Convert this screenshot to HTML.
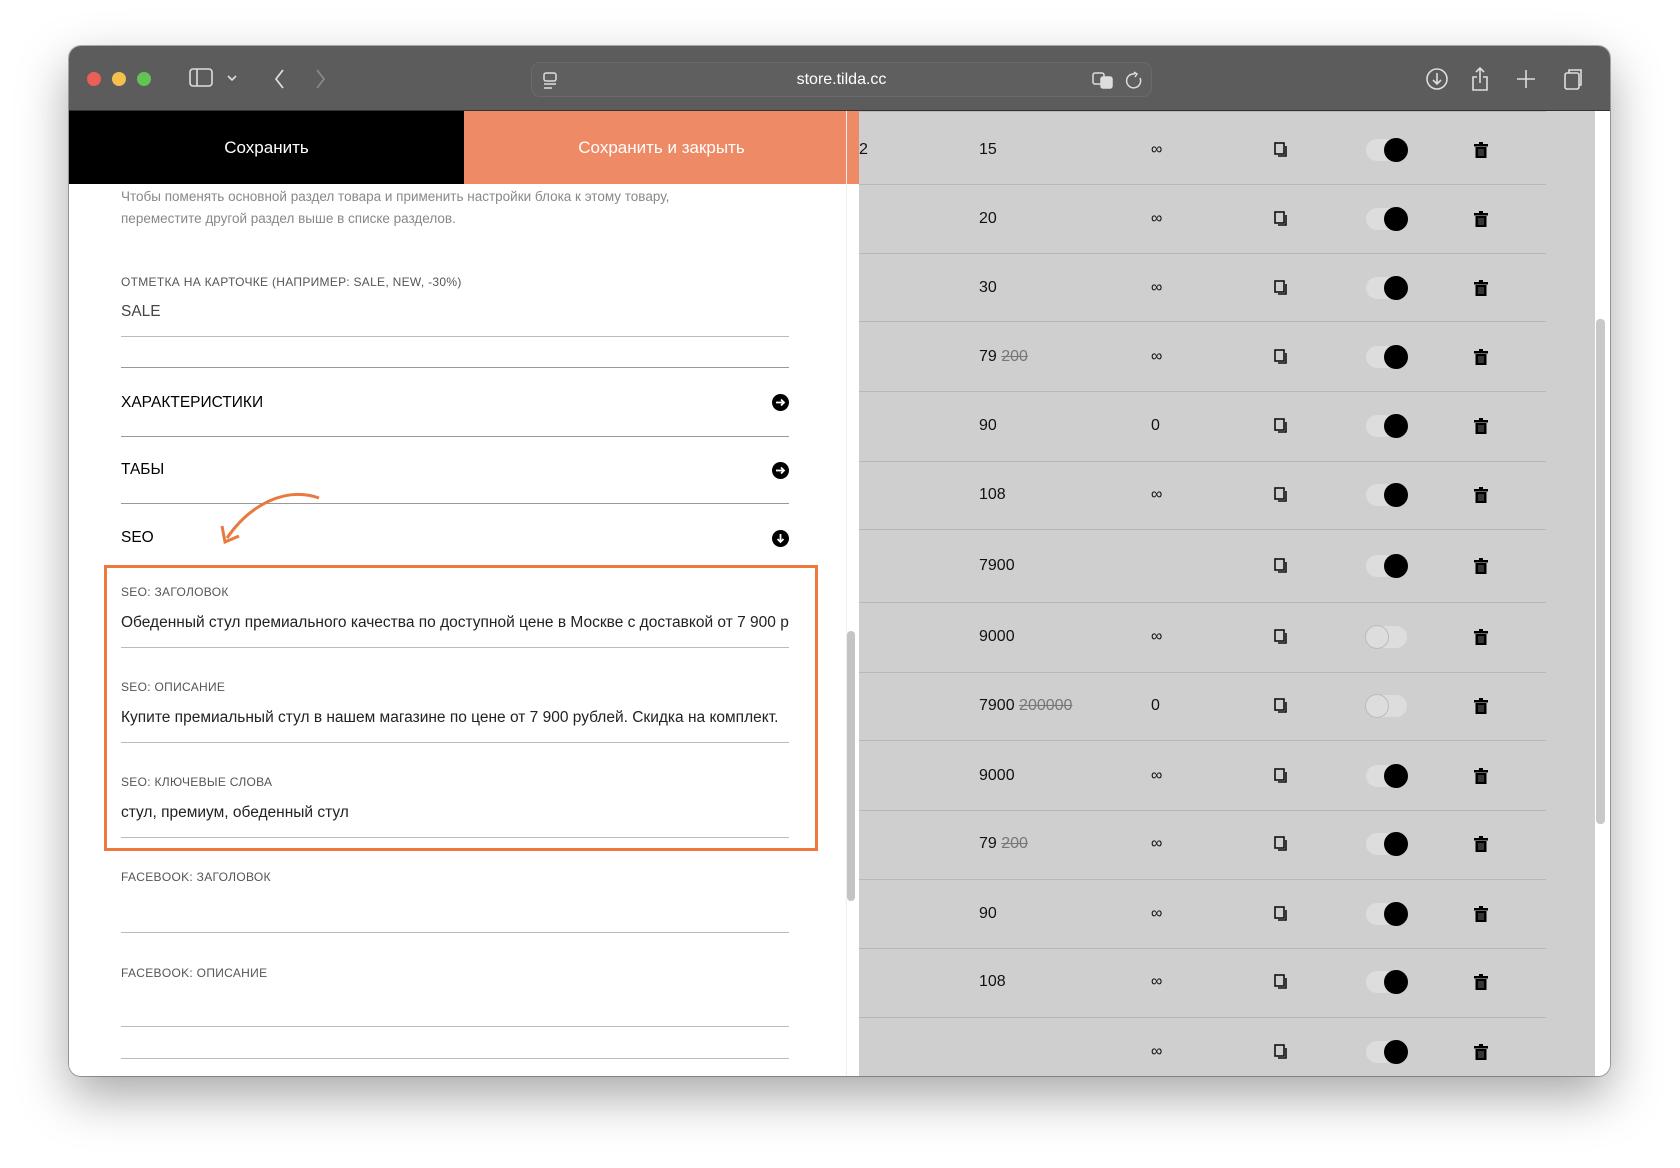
<!DOCTYPE html>
<html><head><meta charset="utf-8"><style>
*{margin:0;padding:0;box-sizing:border-box}
body{width:1680px;height:1168px;background:#fff;position:relative;overflow:hidden;font-family:"Liberation Sans",sans-serif}
.win{position:absolute;left:69px;top:46px;width:1541px;height:1030px;border-radius:12px;overflow:hidden;box-shadow:0 20px 50px rgba(0,0,0,.35),0 0 0 1px rgba(0,0,0,.3);background:#fff}
.tb{position:absolute;left:0;top:0;width:100%;height:65px;background:#5c5c5c;border-bottom:1px solid #333}
.dot{position:absolute;top:26px;width:14px;height:14px;border-radius:50%}
.url{position:absolute;left:462px;top:16px;width:621px;height:35px;border:1px solid #6a6a6a;border-radius:9px;background:#5f5f5f;color:#fff;font-size:16px;text-align:center;line-height:33px}
.a{position:absolute}
.lbl{position:absolute;left:52px;font-size:12px;color:#555;letter-spacing:.3px}
.val{position:absolute;left:52px;font-size:15.5px;color:#222;white-space:nowrap;width:668px;overflow:hidden}
.ln{position:absolute;left:52px;width:668px;height:1px;background:#bbb}
.hd{position:absolute;left:52px;font-size:15.5px;color:#000}
.ic{position:absolute;left:703px;width:17px;height:17px;border-radius:50%;background:#000}
.row{position:absolute;left:790px;width:687px;height:1px;background:#b8b8b8}
.c{position:absolute;font-size:16px;color:#111;transform:translateY(-50%)}
.tg{position:absolute;width:41px;height:22px;border-radius:11px;background:#ddd;transform:translateY(-50%)}
.tg i{position:absolute;top:-1px;width:24px;height:24px;border-radius:50%}
</style></head><body>
<div class="win">
 <div class="tb">
  <div class="dot" style="left:18px;background:#ec5f57"></div>
  <div class="dot" style="left:43px;background:#f4bf4f"></div>
  <div class="dot" style="left:68px;background:#61c454"></div>
  <svg class="a" style="left:120px;top:22px" width="60" height="22" fill="none" stroke="#ddd" stroke-width="1.6"><rect x="1" y="1" width="22" height="17" rx="3"/><line x1="8" y1="1" x2="8" y2="18"/><path d="M39 8l4 4 4-4"/></svg>
  <svg class="a" style="left:203px;top:22px" width="60" height="22" fill="none" stroke-width="1.8"><path d="M11 2l-7 9 7 9" stroke="#ddd"/><path d="M45 2l7 9-7 9" stroke="#888"/></svg>
  <div class="url"><svg class="a" style="left:11px;top:9px" width="14" height="18" fill="none" stroke="#ddd" stroke-width="1.5"><rect x="1" y="1" width="12" height="8" rx="2"/><line x1="1" y1="12" x2="13" y2="12"/><line x1="1" y1="16" x2="9" y2="16"/></svg>store.tilda.cc<svg class="a" style="left:560px;top:8px" width="50" height="20" fill="none" stroke="#ddd" stroke-width="1.5"><rect x="1" y="2" width="11" height="11" rx="2"/><rect x="9" y="6" width="11" height="11" rx="2" fill="#ddd"/><path d="M43 3a7 7 0 1 0 5 4M42 1l3 2-2 3"/></svg></div>
  <svg class="a" style="left:1356px;top:20px" width="170" height="26" fill="none" stroke="#ddd" stroke-width="1.6"><circle cx="12" cy="13" r="10"/><path d="M12 7v11M8 14l4 4 4-4"/><path d="M52 11h-4v13h14V11h-4M55 17V2M51 6l4-4 4 4"/><path d="M101 4v18M92 13h18"/><rect x="140" y="7" width="14" height="16" rx="2"/><path d="M144 7V4h12v15h-2"/></svg>
 </div>
 <!-- left panel -->
 <div class="a" style="left:0;top:65px;width:790px;height:965px;background:#fff">
  <div class="a" style="left:0;top:0;width:395px;height:73px;background:#000;color:#fff;font-size:17px;text-align:center;line-height:73px">Сохранить</div>
  <div class="a" style="left:395px;top:0;width:395px;height:73px;background:#ef8a66;color:#fff;font-size:17px;text-align:center;line-height:73px">Сохранить и закрыть</div>
  <div class="a" style="left:52px;top:75px;font-size:13.5px;color:#888;line-height:22px">Чтобы поменять основной раздел товара и применить настройки блока к этому товару,<br>переместите другой раздел выше в списке разделов.</div>
  <div class="lbl" style="top:164px">ОТМЕТКА НА КАРТОЧКЕ (НАПРИМЕР: SALE, NEW, -30%)</div>
  <div class="val" style="top:192px;color:#444">SALE</div>
  <div class="ln" style="top:225px"></div>
  <div class="ln" style="top:256px;background:#999"></div>
  <div class="hd" style="top:283px">ХАРАКТЕРИСТИКИ</div>
  <div class="ic" style="top:283px"><svg width="17" height="17"><path d="M4 8.5h8M9 5.5l3 3-3 3" stroke="#fff" stroke-width="1.8" fill="none"/></svg></div>
  <div class="ln" style="top:325px;background:#999"></div>
  <div class="hd" style="top:350px">ТАБЫ</div>
  <div class="ic" style="top:351px"><svg width="17" height="17"><path d="M4 8.5h8M9 5.5l3 3-3 3" stroke="#fff" stroke-width="1.8" fill="none"/></svg></div>
  <div class="ln" style="top:392px;background:#999"></div>
  <div class="hd" style="top:418px">SEO</div>
  <div class="ic" style="top:419px"><svg width="17" height="17"><path d="M8.5 4v8M5.5 9l3 3 3-3" stroke="#fff" stroke-width="1.8" fill="none"/></svg></div>
  <svg class="a" style="left:140px;top:375px" width="120" height="70" fill="none" stroke="#e8793f" stroke-width="3"><path d="M110 12C75 0 40 20 18 52"/><path d="M13 40l3 16 14-6"/></svg>
  <div class="a" style="left:35px;top:454px;width:714px;height:286px;border:3px solid #ed7a3c"></div>
  <div class="lbl" style="top:474px">SEO: ЗАГОЛОВОК</div>
  <div class="val" style="top:503px">Обеденный стул премиального качества по доступной цене в Москве с доставкой от 7 900 рублей</div>
  <div class="ln" style="top:536px"></div>
  <div class="lbl" style="top:569px">SEO: ОПИСАНИЕ</div>
  <div class="val" style="top:598px">Купите премиальный стул в нашем магазине по цене от 7 900 рублей. Скидка на комплект.</div>
  <div class="ln" style="top:631px"></div>
  <div class="lbl" style="top:664px">SEO: КЛЮЧЕВЫЕ СЛОВА</div>
  <div class="val" style="top:693px">стул, премиум, обеденный стул</div>
  <div class="ln" style="top:726px"></div>
  <div class="lbl" style="top:759px">FACEBOOK: ЗАГОЛОВОК</div>
  <div class="ln" style="top:821px"></div>
  <div class="lbl" style="top:855px">FACEBOOK: ОПИСАНИЕ</div>
  <div class="ln" style="top:915px"></div>
  <div class="ln" style="top:947px"></div>
  <div class="a" style="left:777px;top:0;width:1px;height:965px;background:#eee"></div>
  <div class="a" style="left:778px;top:520px;width:8px;height:270px;border-radius:4px;background:#c4c4c4"></div>
 </div>
 <!-- right -->
 <div class="a" style="left:790px;top:65px;width:736px;height:965px;background:#cfcfcf"></div>
 <div class="a" style="left:1526px;top:65px;width:15px;height:965px;background:#fff"></div>
 <div class="a" style="left:1527px;top:273px;width:9px;height:505px;border-radius:4px;background:#c8c8c8"></div>
 <div class="c" style="left:790px;top:104px">2</div>
 <div id="rows"></div>
</div>
<script>
var ys=[104,173,242,311,380,449,520,591,660,730,798,868,936,1006];
var pr=['15','20','30','79 <s style="color:#777">200</s>','90','108','7900','9000','7900 <s style="color:#777">200000</s>','9000','79 <s style="color:#777">200</s>','90','108',''];
var q=['∞','∞','∞','∞','0','∞','','∞','0','∞','∞','∞','∞','∞'];
var off=[0,0,0,0,0,0,0,1,1,0,0,0,0,0];
var seps=[65,138,207,275,345,415,483,556,626,694,764,833,902,971];
var h='';
seps.forEach(function(s){h+='<div class="row" style="top:'+s+'px"></div>'});
ys.forEach(function(y,i){
h+='<div class="c" style="left:910px;top:'+y+'px">'+pr[i]+'</div>';
h+='<div class="c" style="left:1082px;top:'+y+'px">'+q[i]+'</div>';
h+='<svg class="c" style="left:1205px;top:'+y+'px" width="14" height="16" fill="none" stroke="#111" stroke-width="1.6"><rect x="1" y="1" width="9" height="11"/><path d="M12 4v10H4"/></svg>';
h+='<div class="tg" style="left:1297px;top:'+y+'px">'+(off[i]?'<i style="left:-1px;background:#ddd;border:1.5px solid #bbb"></i>':'<i style="left:18px;background:#000"></i>')+'</div>';
h+='<svg class="c" style="left:1405px;top:'+y+'px" width="14" height="16"><rect x="0" y="2" width="14" height="2.5" fill="#000"/><rect x="5" y="0" width="4" height="2" fill="#000"/><rect x="1.5" y="5" width="11" height="11" fill="#000"/><path d="M5 7v7M7 7v7M9 7v7" stroke="#888" stroke-width=".8"/></svg>';
});
document.getElementById('rows').outerHTML=h;
</script>
</body></html>
